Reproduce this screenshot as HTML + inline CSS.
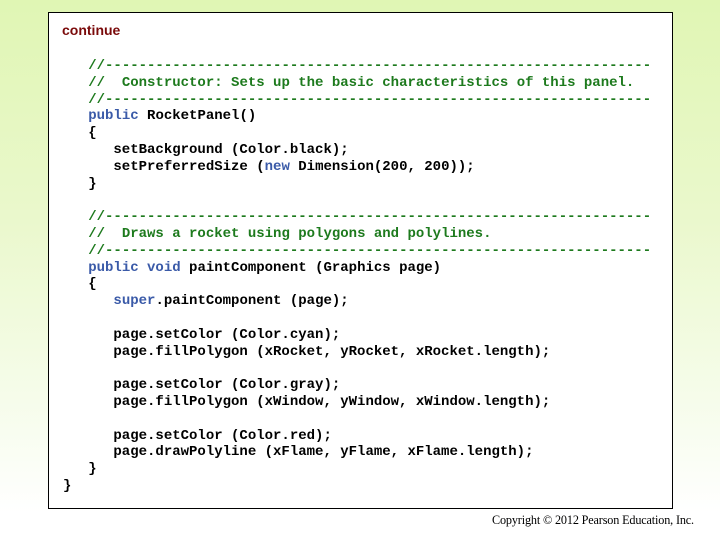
<!DOCTYPE html>
<html><head><meta charset="utf-8"><style>
html,body{margin:0;padding:0}
body{width:720px;height:540px;position:relative;overflow:hidden;background:linear-gradient(to bottom,#e0f6b4 0%,#eaf8cc 40%,#f8fdf0 80%,#ffffff 95%)}
.box{position:absolute;left:48px;top:12px;width:623px;height:495px;background:#fff;border:1px solid #000}
.cont{position:absolute;left:62px;top:22px;font:bold 14px "Liberation Sans",sans-serif;color:#7a0a0a}
pre{position:absolute;left:63px;top:58px;margin:0;font:bold 14px/16.8px "Liberation Mono",monospace;color:#000}
.c{color:#1d7a1d}.k{color:#3a5aa8}
.copy{position:absolute;left:492px;top:513px;font:12.2px "Liberation Serif",serif;color:#000;letter-spacing:-0.15px}
</style></head><body>
<div class="box"></div>
<div class="cont">continue</div>
<pre>   <span class="c">//-----------------------------------------------------------------</span>
   <span class="c">//  Constructor: Sets up the basic characteristics of this panel.</span>
   <span class="c">//-----------------------------------------------------------------</span>
   <span class="k">public</span> RocketPanel()
   {
      setBackground (Color.black);
      setPreferredSize (<span class="k">new</span> Dimension(200, 200));
   }

   <span class="c">//-----------------------------------------------------------------</span>
   <span class="c">//  Draws a rocket using polygons and polylines.</span>
   <span class="c">//-----------------------------------------------------------------</span>
   <span class="k">public void</span> paintComponent (Graphics page)
   {
      <span class="k">super</span>.paintComponent (page);

      page.setColor (Color.cyan);
      page.fillPolygon (xRocket, yRocket, xRocket.length);

      page.setColor (Color.gray);
      page.fillPolygon (xWindow, yWindow, xWindow.length);

      page.setColor (Color.red);
      page.drawPolyline (xFlame, yFlame, xFlame.length);
   }
}</pre>
<div class="copy">Copyright © 2012 Pearson Education, Inc.</div>
</body></html>
